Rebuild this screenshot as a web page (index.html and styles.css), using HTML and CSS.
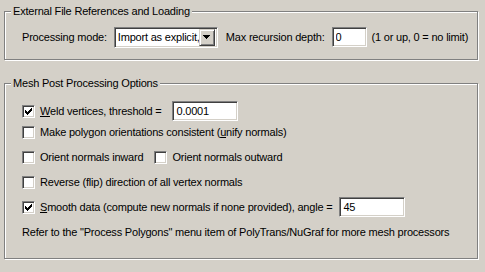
FILE: index.html
```html
<!DOCTYPE html>
<html lang="en">
<head>
    <meta charset="UTF-8">
    <title>Import Options</title>
    <link rel="stylesheet" href="styles.css">
</head>
<body>

    <!-- External references group -->
    <div class="group group-refs">
        <span class="group-title">External File References and Loading</span>
        <div class="row">
            <span class="label">Processing mode:</span>
            <div class="combo">
                <span class="combo-text">Import as explicit,</span>
                <span class="combo-btn">
                    <svg width="7" height="4" viewBox="0 0 7 4"><path d="M0 0h7v1h-1v1h-1v1h-1v1h-1v-1h-1v-1h-1v-1h-1z" fill="#000"/></svg>
                </span>
            </div>
            <span class="label label-depth">Max recursion depth:</span>
            <input class="field field-depth" type="text" value="0">
            <span class="label">(1 or up, 0 = no limit)</span>
        </div>
    </div>

    <!-- Mesh options group -->
    <div class="group group-mesh">
        <span class="group-title">Mesh Post Processing Options</span>

        <div class="row row-weld">
            <span class="check checked"><svg width="9" height="9" viewBox="2 2 9 9"><path d="M3 5h1v3h-1zM4 6h1v3h-1zM5 7h1v3h-1zM6 6h1v3h-1zM7 5h1v3h-1zM8 4h1v3h-1zM9 3h1v3h-1z" fill="#000"/></svg></span>
            <span class="label"><u>W</u>eld vertices, threshold =</span>
            <input class="field field-weld" type="text" value="0.0001">
        </div>

        <div class="row">
            <span class="check"></span>
            <span class="label">Make polygon orientations consistent (<u>u</u>nify normals)</span>
        </div>

        <div class="row">
            <span class="check"></span>
            <span class="label label-inward">Orient normals inward</span>
            <span class="check"></span>
            <span class="label">Orient normals outward</span>
        </div>

        <div class="row">
            <span class="check"></span>
            <span class="label">Reverse (flip) direction of all vertex normals</span>
        </div>

        <div class="row">
            <span class="check checked"><svg width="9" height="9" viewBox="2 2 9 9"><path d="M3 5h1v3h-1zM4 6h1v3h-1zM5 7h1v3h-1zM6 6h1v3h-1zM7 5h1v3h-1zM8 4h1v3h-1zM9 3h1v3h-1z" fill="#000"/></svg></span>
            <span class="label"><u>S</u>mooth data (compute new normals if none provided), angle =</span>
            <input class="field field-angle" type="text" value="45">
        </div>

        <div class="row">
            <span class="label">Refer to the "Process Polygons" menu item of PolyTrans/NuGraf for more mesh processors</span>
        </div>
    </div>

</body>
</html>
```

FILE: styles.css
```css
body {
    margin: 0;
    background-color: #d4d0c8; /* classic dialog grey */
    font-family: "Liberation Sans", Arial, sans-serif;
    font-size: 11px;
    line-height: 13px;
    letter-spacing: -0.2px; /* closer to MS Sans Serif widths */
    color: #000;
    width: 485px;
    height: 272px;
    overflow: hidden;
}

/* etched group box */
.group {
    position: relative;
    margin-left: 4px;
    width: 474px;
    box-sizing: border-box;
    border: 1px solid #808080;
    box-shadow: inset 1px 1px #fff, 1px 1px #fff;
}

.group-refs {
    margin-top: 11px;
    padding: 15px 0 12px 17px;
}

.group-mesh {
    margin-top: 23px;
    padding: 17px 0 16px 17px;
    display: flex;
    flex-direction: column;
    gap: 5px;
}

.group-title {
    position: absolute;
    left: 6px;
    top: -7px;
    padding: 0 2px;
    background-color: #d4d0c8;
}

.row {
    display: flex;
    align-items: center;
    height: 20px;
}

.row-weld {
    margin-bottom: -4px;
}

.label {
    white-space: nowrap;
}

/* combo box */
.combo {
    display: flex;
    align-items: center;
    width: 104px;
    height: 21px;
    box-sizing: border-box;
    margin: 0 8px 0 7px;
    padding: 2px;
    background-color: #fff;
    border: 1px solid;
    border-color: #808080 #fff #fff #808080;
    box-shadow: inset 1px 1px #404040, inset -1px -1px #d4d0c8;
}

.combo-text {
    flex: 1;
    overflow: hidden;
    white-space: nowrap;
    padding-left: 1px;
}

.combo-btn {
    display: flex;
    align-items: center;
    justify-content: center;
    width: 16px;
    height: 17px;
    box-sizing: border-box;
    background-color: #d4d0c8;
    border: 1px solid;
    border-color: #d4d0c8 #404040 #404040 #d4d0c8;
    box-shadow: inset 1px 1px #fff, inset -1px -1px #808080;
}

/* sunken edit fields */
.field {
    height: 20px;
    box-sizing: border-box;
    margin: 0;
    padding: 0 3px;
    font: inherit;
    letter-spacing: inherit;
    color: #000;
    background-color: #fff;
    border: 1px solid;
    border-color: #808080 #fff #fff #808080;
    box-shadow: inset 1px 1px #404040, inset -1px -1px #d4d0c8;
    outline: none;
}

.field-depth {
    width: 35px;
    margin: 0 5px 0 7px;
}

.field-weld {
    width: 66px;
    margin-left: 11px;
}

.field-angle {
    width: 66px;
    margin-left: 7px;
}

/* checkboxes */
.check {
    display: inline-flex;
    align-items: center;
    justify-content: center;
    width: 13px;
    height: 13px;
    box-sizing: border-box;
    margin-right: 5px;
    background-color: #fff;
    border: 1px solid;
    border-color: #808080 #fff #fff #808080;
    box-shadow: inset 1px 1px #404040, inset -1px -1px #d4d0c8;
}

.label-inward {
    margin-right: 11px;
}
```
